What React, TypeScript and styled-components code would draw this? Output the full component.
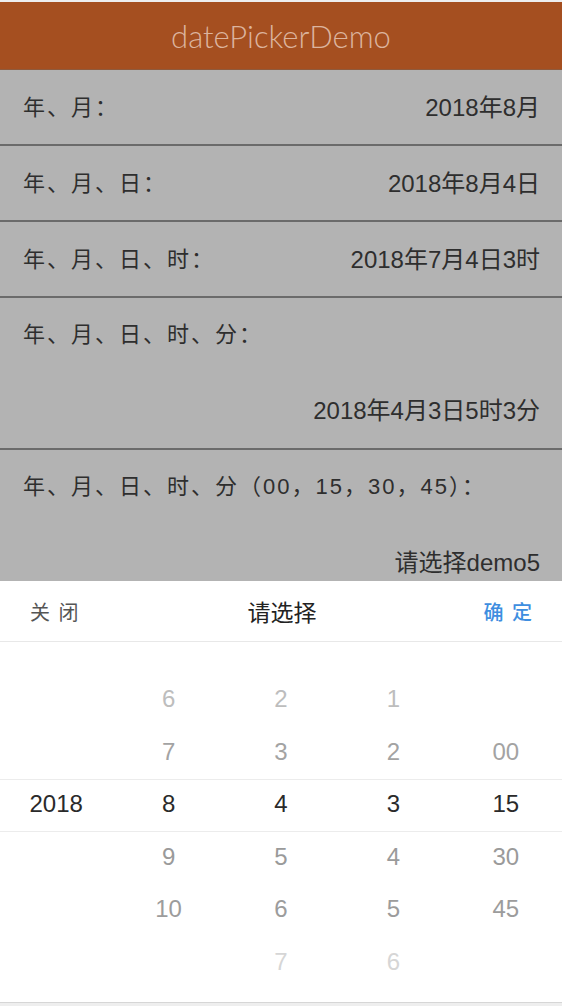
import styled, { createGlobalStyle } from "styled-components";

const GlobalStyle = createGlobalStyle`
  html, body {
    margin: 0;
    padding: 0;
    background: #ffffff;
  }
  body {
    font-family: "Liberation Sans", "Noto Sans CJK SC", sans-serif;
  }
`;

interface Item {
  label: string;
  value: string;
  tall?: boolean;
}

const items: Item[] = [
  { label: "年、月：", value: "2018年8月" },
  { label: "年、月、日：", value: "2018年8月4日" },
  { label: "年、月、日、时：", value: "2018年7月4日3时" },
  { label: "年、月、日、时、分：", value: "2018年4月3日5时3分", tall: true },
  {
    label: "年、月、日、时、分（00，15，30，45）：",
    value: "请选择demo5",
    tall: true,
  },
];

// each column lists 6 slots, top to bottom; "" is an empty slot
const columns: string[][] = [
  ["", "", "2018", "", "", ""],
  ["6", "7", "8", "9", "10", ""],
  ["2", "3", "4", "5", "6", "7"],
  ["1", "2", "3", "4", "5", "6"],
  ["", "00", "15", "30", "45", ""],
];

const slotColors = ["#bdbdbd", "#a3a3a3", "#2a2a2a", "#9a9a9a", "#9c9c9c", "#d6d6d6"];

export default function App() {
  return (
    <>
      <GlobalStyle />
      <Page>
        <Header>datePickerDemo</Header>
        <List>
          {items.map((item, i) => (
            <Row key={i} $tall={item.tall}>
              <Label>{item.label}</Label>
              <Value>{item.value}</Value>
            </Row>
          ))}
        </List>
        <Sheet>
          <SheetBar>
            <BarButton>关 闭</BarButton>
            <BarTitle>请选择</BarTitle>
            <BarButton $primary>确 定</BarButton>
          </SheetBar>
          <Wheels>
            <SelectBand />
            {columns.map((col, c) => (
              <Column key={c}>
                {col.map((v, s) => (
                  <Slot key={s} $color={slotColors[s]}>
                    {v}
                  </Slot>
                ))}
              </Column>
            ))}
          </Wheels>
        </Sheet>
      </Page>
    </>
  );
}

const Page = styled.div`
  position: relative;
  width: 562px;
  height: 1006px;
  padding-top: 2px;
  box-sizing: border-box;
  overflow: hidden;
  display: flex;
  flex-direction: column;
  background: #eeeeee;
`;

const Header = styled.div`
  flex: none;
  height: 67px;
  background: #a54f20;
  color: #dcb49e;
  font-family: Lato, "Open Sans", sans-serif;
  font-weight: 300;
  font-size: 31px;
  display: flex;
  align-items: center;
  justify-content: center;
  border-bottom: 1px solid #8f5a3c;
`;

const List = styled.div`
  display: flex;
  flex-direction: column;
  background: #b3b3b3;
`;

const Row = styled.div<{ $tall?: boolean }>`
  flex: none;
  display: flex;
  box-sizing: border-box;
  flex-direction: ${({ $tall }) => ($tall ? "column" : "row")};
  justify-content: ${({ $tall }) => ($tall ? "flex-start" : "space-between")};
  align-items: ${({ $tall }) => ($tall ? "stretch" : "center")};
  height: ${({ $tall }) => ($tall ? "152px" : "76px")};
  padding: ${({ $tall }) => ($tall ? "19px 22px 0 23px" : "0 22px 0 23px")};
  gap: ${({ $tall }) => ($tall ? "41px" : "0")};
  border-bottom: 2px solid #6b6b6b;
  color: #2e2e2e;
  line-height: 35px;
`;

const Label = styled.div`
  font-size: 22px;
  letter-spacing: 2px;
`;

const Value = styled.div`
  text-align: right;
  font-size: 24px;
`;

const Sheet = styled.div`
  position: absolute;
  left: 0;
  right: 0;
  top: 581px;
  height: 421px;
  background: #ffffff;
  border-bottom: 1px solid #d6d6d6;
  display: flex;
  flex-direction: column;
`;

const SheetBar = styled.div`
  height: 60px;
  display: flex;
  align-items: center;
  justify-content: space-between;
  padding: 0 28px 0 30px;
  border-bottom: 1px solid #e8e8e8;
  font-family: "Noto Sans CJK SC", sans-serif;
`;

const BarButton = styled.div<{ $primary?: boolean }>`
  font-size: 20px;
  color: ${({ $primary }) => ($primary ? "#3e8ee0" : "#555555")};
  font-weight: ${({ $primary }) => ($primary ? 500 : 400)};
  letter-spacing: 2px;
  width: 60px;
  text-align: ${({ $primary }) => ($primary ? "right" : "left")};
`;

const BarTitle = styled.div`
  font-size: 23px;
  color: #222222;
`;

const Wheels = styled.div`
  position: relative;
  display: grid;
  grid-template-columns: repeat(5, 1fr);
  padding-top: 31px;
`;

const SelectBand = styled.div`
  position: absolute;
  left: 0;
  right: 0;
  top: 137px;
  height: 51px;
  border-top: 1px solid #ececec;
  border-bottom: 1px solid #ececec;
`;

const Column = styled.div`
  display: flex;
  flex-direction: column;
  align-items: center;
`;

const Slot = styled.div<{ $color: string }>`
  height: 52.5px;
  display: flex;
  align-items: center;
  justify-content: center;
  font-family: "Liberation Sans", Arial, sans-serif;
  font-size: 24px;
  color: ${({ $color }) => $color};
`;
